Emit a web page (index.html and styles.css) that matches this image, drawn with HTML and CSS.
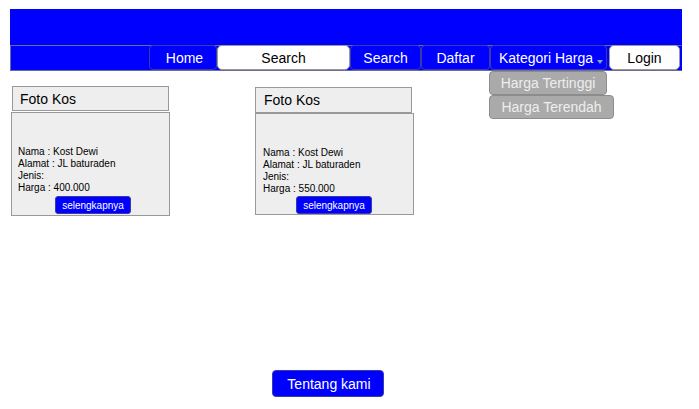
FILE: index.html
```html
<!DOCTYPE html>
<html lang="en">
<head>
  <meta charset="UTF-8">
  <meta name="viewport" content="width=device-width, initial-scale=1.0">
  <title>Kost</title>
  <link rel="stylesheet" href="styles.css">
</head>
<body>
  <div class="page">
    <div class="header"></div>
    <div class="nav">
      <a class="nav-btn home" href="#">Home</a>
      <div class="nav-search">Search</div>
      <a class="nav-btn search" href="#">Search</a>
      <a class="nav-btn daftar" href="#">Daftar</a>
      <div class="dropdown">
        <a class="nav-btn kategori" href="#">Kategori Harga <span class="arrow"></span></a>
        <div class="dropdown-menu">
          <a class="menu-item first" href="#">Harga Tertinggi</a>
          <a class="menu-item second" href="#">Harga Terendah</a>
        </div>
      </div>
      <a class="nav-btn login" href="#">Login</a>
    </div>

    <div class="cards">
      <div class="card">
        <div class="card-title">Foto Kos</div>
        <div class="card-body">
          <p>Nama : Kost Dewi<br>Alamat : JL baturaden<br>Jenis:<br>Harga : 400.000</p>
          <a class="more" href="#">selengkapnya</a>
        </div>
      </div>
      <div class="card second">
        <div class="card-title">Foto Kos</div>
        <div class="card-body">
          <p>Nama : Kost Dewi<br>Alamat : JL baturaden<br>Jenis:<br>Harga : 550.000</p>
          <a class="more" href="#">selengkapnya</a>
        </div>
      </div>
    </div>

    <div class="footer">
      <a class="about" href="#">Tentang kami</a>
    </div>
  </div>
</body>
</html>
```

FILE: styles.css
```css
body {
  margin: 0;
  font-family: 'Liberation Sans', Arial, sans-serif;
  background-color: #ffffff;
}

a {
  text-decoration: none;
}

.page {
  padding: 9px 17px 0 10px;
}

.header {
  height: 36px;
  background-color: #0000ff;
}

.nav {
  display: flex;
  justify-content: flex-end;
  height: 24px;
  padding-right: 1px;
  background-color: #0000ff;
  border: 1px solid #6b6b9e;
  border-right: 1px solid #0000ff;
}

.nav-btn,
.nav-search {
  display: flex;
  align-items: center;
  justify-content: center;
  box-sizing: border-box;
  height: 25px;
  margin-top: -1px;
  font-size: 14px;
  white-space: nowrap;
  color: #ffffff;
  background-color: #0000ff;
  border: 1px solid #3a3aa8;
  border-radius: 4px;
}

.home {
  width: 68px;
  padding-left: 3px;
}

.nav-search {
  width: 133px;
  color: #000000;
  background-color: #ffffff;
  border-color: #999999;
  border-radius: 5px;
}

.search {
  width: 71px;
}

.daftar {
  width: 69px;
}

.dropdown {
  position: relative;
}

.kategori {
  width: 117px;
  margin-right: 2px;
  padding-left: 5px;
}

.arrow {
  display: inline-block;
  width: 0;
  height: 0;
  margin: 8px 0 0 4px;
  border-left: 3px solid transparent;
  border-right: 3px solid transparent;
  border-top: 4px solid #7fa8b0;
}

.login {
  width: 71px;
  color: #000000;
  background-color: #ffffff;
  border-color: #999999;
  border-radius: 5px;
}

.dropdown-menu {
  position: absolute;
  top: 25px;
  left: -1px;
}

.menu-item {
  display: flex;
  align-items: center;
  justify-content: center;
  box-sizing: border-box;
  height: 24px;
  font-size: 14px;
  color: #eeeeee;
  background-color: #aaaaaa;
  border: 1px solid #8c8c8c;
  border-radius: 4px;
}

.menu-item.first {
  width: 118px;
}

.menu-item.second {
  width: 125px;
}

.cards {
  display: flex;
  gap: 85px;
  margin-top: 15px;
  margin-left: 1px;
}

.card {
  width: 159px;
}

.card-title {
  box-sizing: border-box;
  height: 25px;
  width: 157px;
  margin-left: 1px;
  padding: 4px 0 0 7px;
  font-size: 14px;
  color: #000000;
  background-color: #eeeeee;
  border: 1px solid #999999;
}

.card.second .card-title {
  width: 157px;
  height: 26px;
  margin-left: 0;
  margin-top: 1px;
  padding-left: 8px;
}

.card-body {
  box-sizing: border-box;
  height: 104px;
  margin-top: 1px;
  padding-top: 33px;
  background-color: #eeeeee;
  border: 1px solid #999999;
}

.card.second .card-body {
  height: 102px;
  margin-top: 0;
}

.card-body p {
  margin: 0 0 0 6px;
  font-size: 10px;
  line-height: 12px;
  color: #000000;
}

.card.second .card-body p {
  margin-left: 7px;
}

.more {
  display: block;
  width: 76px;
  height: 18px;
  margin: 2px 0 0 43px;
  box-sizing: border-box;
  padding-top: 3px;
  font-size: 10px;
  text-align: center;
  color: #ffffff;
  background-color: #0000ff;
  border: 1px solid #3a3aa8;
  border-radius: 3px;
}

.card.second .more {
  margin: 1px 0 0 40px;
}

.footer {
  margin-top: 154px;
  padding-left: 262px;
}

.about {
  display: inline-flex;
  align-items: center;
  justify-content: center;
  box-sizing: border-box;
  width: 112px;
  height: 27px;
  padding-left: 2px;
  font-size: 14px;
  color: #ffffff;
  background-color: #0000ff;
  border: 1px solid #3a3aa8;
  border-radius: 4px;
}
```
